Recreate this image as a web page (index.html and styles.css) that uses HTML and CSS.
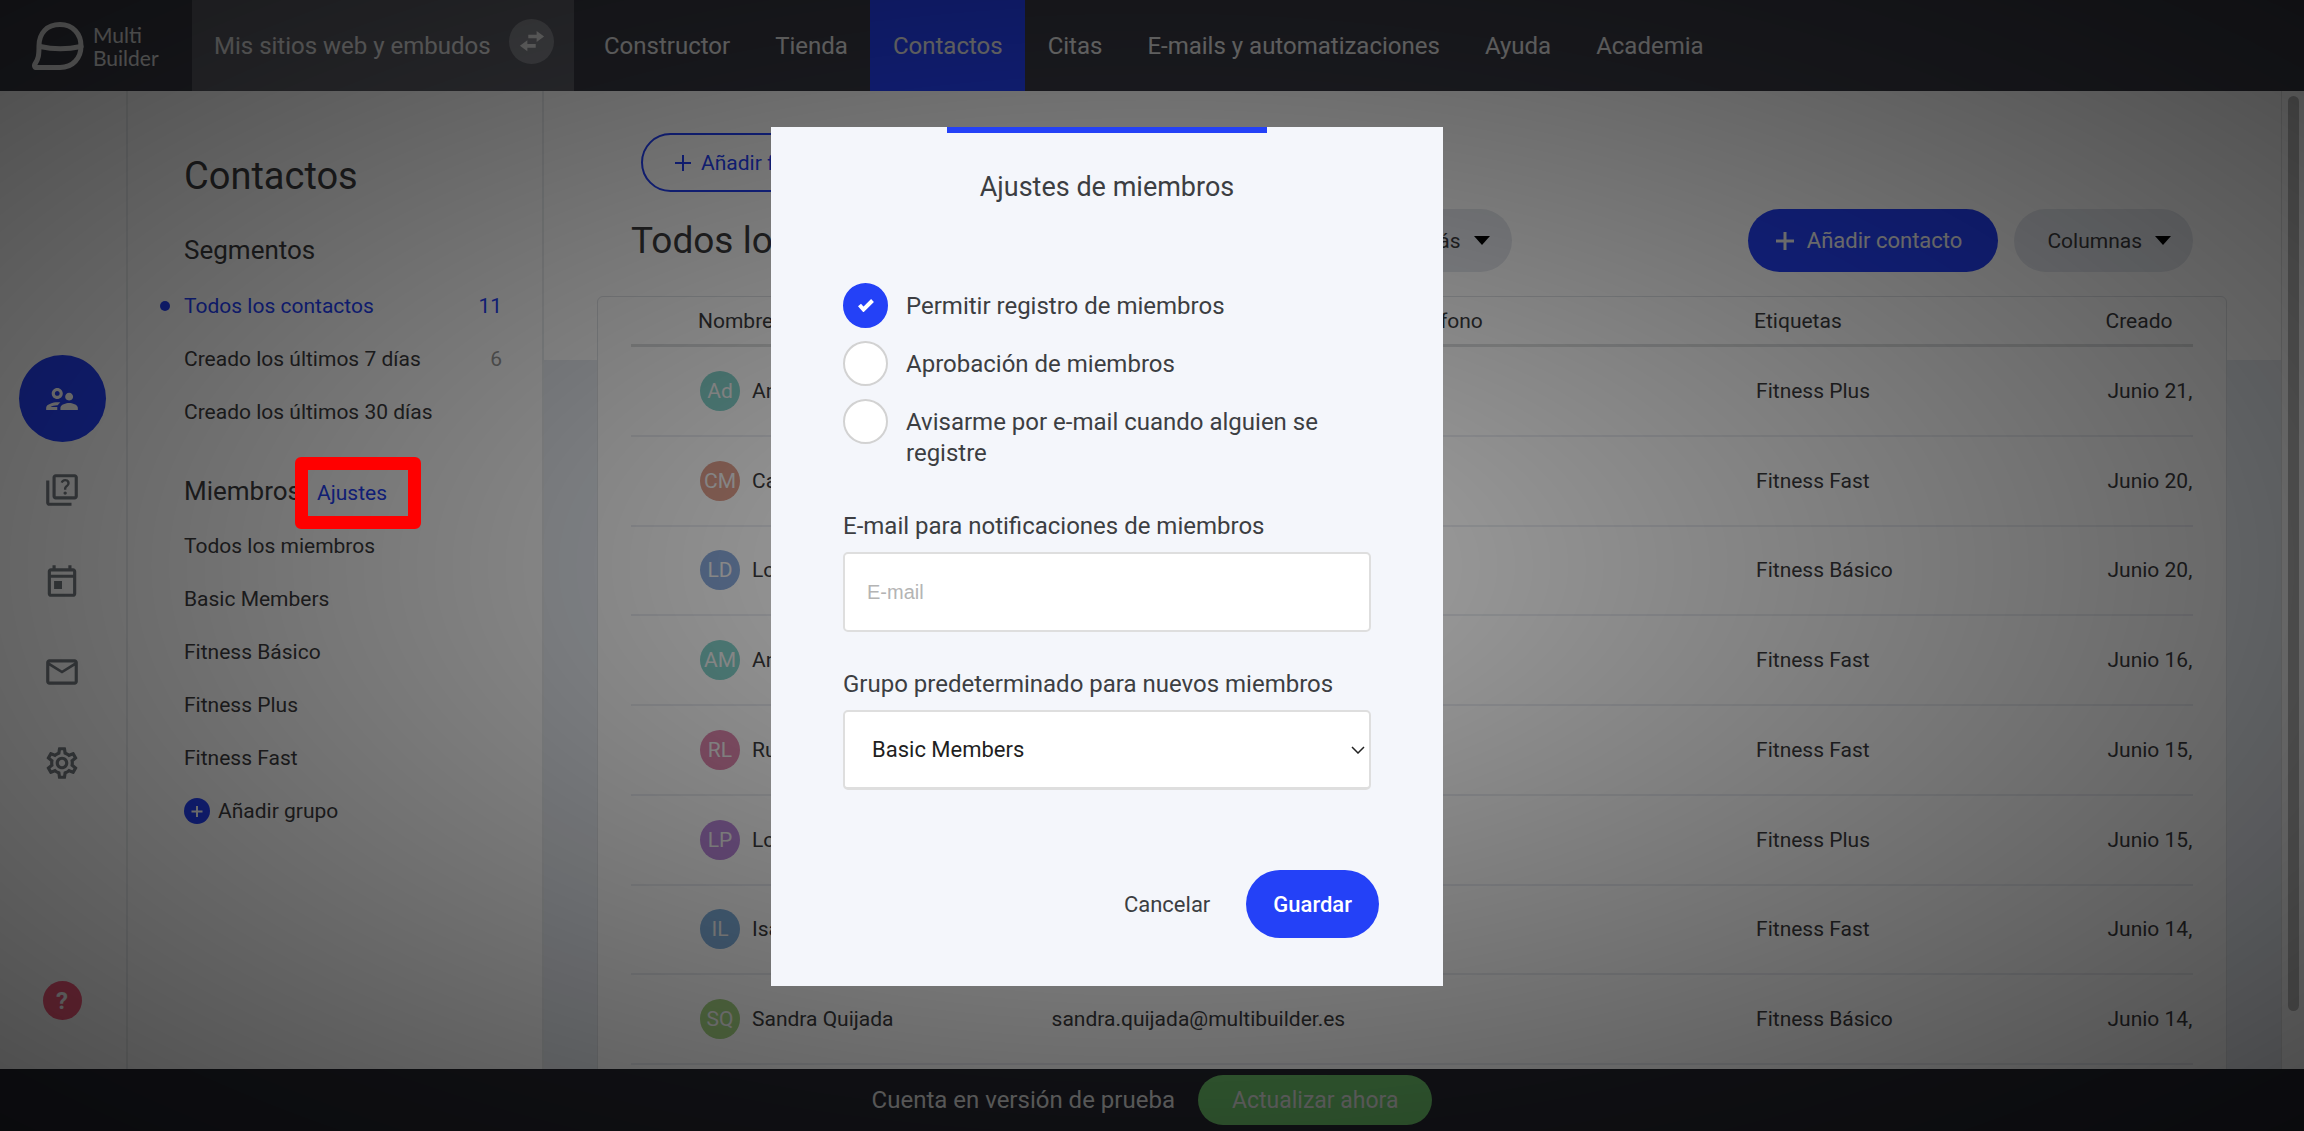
FILE: index.html
```html
<!DOCTYPE html>
<html lang="es">
<head>
    <meta charset="UTF-8">
    <meta name="viewport" content="width=device-width, initial-scale=1.0">
    <title>Contactos - Multi Builder</title>
    <link rel="stylesheet" href="styles.css">
</head>
<body>

<header class="topbar">
    <a href="#" class="logo">
        <svg class="logo-mark" viewBox="0 0 52 48" fill="none" stroke="currentColor" stroke-width="5" stroke-linecap="round" stroke-linejoin="round">
            <path d="M7 24C7 11 15 2.500 28 2.500S49 12 49 24 41 45.500 28 45.500H4.500c-2 0-2.500-2-1.500-3.500C6.500 37 7 33 7 24z"/>
            <path d="M8 24.500q20 4.500 41 0"/>
        </svg>
        <span>Multi<br>Builder</span>
    </a>
    <button type="button" class="site-switch">
        <span>Mis sitios web y embudos</span>
        <span class="switch-icon">
            <svg viewBox="0 0 28 24" fill="currentColor">
                <path d="M19 1l8 6-8 6V9H10V5h9zM9 11l-8 6 8 6v-4h9v-4H9z"/>
            </svg>
        </span>
    </button>
    <nav class="main-nav">
        <a href="#">Constructor</a>
        <a href="#">Tienda</a>
        <a href="#" class="active">Contactos</a>
        <a href="#">Citas</a>
        <a href="#">E-mails y automatizaciones</a>
        <a href="#">Ayuda</a>
        <a href="#">Academia</a>
    </nav>
</header>

<div class="workspace">
    <nav class="rail" aria-label="Herramientas">
        <div class="rail-links">
            <a href="#" class="rail-link active" aria-label="Contactos">
                <svg viewBox="0 0 24 24" fill="currentColor"><path d="M9 12c1.930 0 3.500-1.570 3.500-3.500S10.930 5 9 5 5.500 6.570 5.500 8.500 7.070 12 9 12zm0-5c.830 0 1.500.670 1.500 1.500S9.830 10 9 10s-1.500-.670-1.500-1.500S8.170 7 9 7zM9.050 17H4.770c.990-.5 2.700-1 4.230-1 .110 0 .230.010.340.010.340-.730.930-1.330 1.640-1.810-.730-.130-1.420-.2-1.980-.2-2.340 0-7 1.170-7 3.500V19h7v-1.500c0-.170.020-.340.050-.5zM16.500 14.500c-1.840 0-5.500 1.010-5.500 3V19h11v-1.500c0-1.990-3.660-3-5.500-3zm1.210-1.820c.760-.430 1.290-1.240 1.290-2.180C19 9.120 17.880 8 16.500 8S14 9.120 14 10.500c0 .940.530 1.750 1.290 2.180.360.200.770.320 1.210.320s.850-.120 1.210-.320z"/></svg>
            </a>
            <a href="#" class="rail-link" aria-label="Cuestionarios">
                <svg viewBox="0 0 24 24" fill="currentColor"><path d="M4 6H2v14c0 1.100.9 2 2 2h14v-2H4V6zm16-4H8c-1.100 0-2 .9-2 2v12c0 1.100.9 2 2 2h12c1.100 0 2-.9 2-2V4c0-1.100-.9-2-2-2zm0 14H8V4h12v12zm-6.490-5.840c.410-.730 1.180-1.160 1.630-1.800.480-.680.210-1.940-1.140-1.940-.880 0-1.320.670-1.500 1.230l-1.370-.570C11.510 5.960 12.520 5 13.990 5c1.230 0 2.080.560 2.510 1.260.370.610.580 1.730.010 2.570-.630.930-1.230 1.210-1.560 1.810-.130.240-.180.400-.180 1.180h-1.520c.010-.410-.060-1.080.260-1.660zm-.560 3.790c0-.590.470-1.040 1.050-1.040.590 0 1.040.450 1.040 1.040 0 .580-.440 1.050-1.040 1.050-.580 0-1.050-.470-1.050-1.050z"/></svg>
            </a>
            <a href="#" class="rail-link" aria-label="Calendario">
                <svg viewBox="0 0 24 24" fill="currentColor"><path d="M19 4h-1V2h-2v2H8V2H6v2H5c-1.110 0-2 .9-2 2v14c0 1.100.890 2 2 2h14c1.100 0 2-.9 2-2V6c0-1.100-.9-2-2-2zm0 16H5V10h14v10zm0-12H5V6h14v2zM7 12h5v5H7z"/></svg>
            </a>
            <a href="#" class="rail-link" aria-label="E-mails">
                <svg viewBox="0 0 24 24" fill="currentColor"><path d="M22 6c0-1.100-.9-2-2-2H4c-1.100 0-2 .9-2 2v12c0 1.100.9 2 2 2h16c1.100 0 2-.9 2-2V6zm-2 0l-8 5-8-5h16zm0 12H4V8l8 5 8-5v10z"/></svg>
            </a>
            <a href="#" class="rail-link" aria-label="Ajustes generales">
                <svg viewBox="0 0 24 24" fill="currentColor"><path d="M19.430 12.980c.040-.320.070-.640.070-.980s-.030-.660-.070-.980l2.110-1.650c.190-.150.240-.420.120-.640l-2-3.460c-.090-.160-.260-.250-.440-.250-.060 0-.120.010-.170.030l-2.490 1c-.520-.400-1.080-.730-1.690-.980l-.380-2.650C14.460 2.180 14.250 2 14 2h-4c-.250 0-.460.180-.490.420l-.380 2.650c-.610.250-1.170.590-1.690.980l-2.490-1c-.060-.020-.120-.030-.180-.030-.170 0-.340.090-.430.250l-2 3.460c-.130.220-.070.490.120.640l2.110 1.650c-.040.320-.070.650-.070.980s.030.660.070.980l-2.110 1.650c-.190.150-.240.420-.120.640l2 3.460c.090.160.260.250.440.250.060 0 .120-.010.170-.030l2.490-1c.520.400 1.080.730 1.690.980l.380 2.650c.030.240.240.420.490.420h4c.250 0 .460-.180.490-.420l.380-2.650c.610-.250 1.170-.590 1.690-.980l2.490 1c.060.020.120.030.180.030.170 0 .340-.090.430-.250l2-3.460c.120-.220.070-.490-.120-.640l-2.110-1.650zm-1.980-1.710c.040.310.050.520.050.730 0 .210-.020.430-.050.730l-.140 1.130.890.700 1.080.840-.700 1.210-1.270-.510-1.040-.420-.9.680c-.430.320-.840.560-1.250.730l-1.060.430-.160 1.130-.2 1.350h-1.400l-.190-1.350-.160-1.130-1.060-.430c-.430-.180-.830-.410-1.230-.710l-.910-.7-1.060.430-1.270.510-.7-1.210 1.080-.840.890-.7-.140-1.130c-.030-.310-.050-.540-.050-.740s.020-.430.050-.730l.140-1.130-.890-.7-1.080-.840.7-1.210 1.270.510 1.040.420.9-.680c.430-.320.840-.560 1.250-.730l1.060-.430.160-1.130.2-1.350h1.390l.190 1.350.160 1.130 1.060.430c.430.180.830.410 1.230.710l.910.7 1.060-.430 1.270-.510.7 1.210-1.070.850-.890.7.140 1.130zM12 8c-2.210 0-4 1.790-4 4s1.790 4 4 4 4-1.790 4-4-1.790-4-4-4zm0 6c-1.100 0-2-.9-2-2s.9-2 2-2 2 .9 2 2-.9 2-2 2z"/></svg>
            </a>
        </div>
        <button type="button" class="help">?</button>
    </nav>

    <aside class="panel">
        <h1>Contactos</h1>
        <h2>Segmentos</h2>
        <ul class="groups">
            <li class="current"><a href="#">Todos los contactos</a><span class="count">11</span></li>
            <li><a href="#">Creado los últimos 7 días</a><span class="count">6</span></li>
            <li><a href="#">Creado los últimos 30 días</a></li>
        </ul>
        <div class="members-head">
            <h2>Miembros</h2>
            <a href="#" class="settings-link">Ajustes</a>
        </div>
        <ul class="groups">
            <li><a href="#">Todos los miembros</a></li>
            <li><a href="#">Basic Members</a></li>
            <li><a href="#">Fitness Básico</a></li>
            <li><a href="#">Fitness Plus</a></li>
            <li><a href="#">Fitness Fast</a></li>
        </ul>
        <button type="button" class="add-group">
            <svg viewBox="0 0 26 26"><circle cx="13" cy="13" r="13" fill="#2441f7"/><path d="M13 8v11M7.500 13.500h11" stroke="#fff" stroke-width="2"/></svg>
            Añadir grupo
        </button>
    </aside>

    <main class="content">
        <button type="button" class="outline-btn">
            <svg viewBox="0 0 16 16" fill="none" stroke="currentColor" stroke-width="2"><path d="M8 0v16M0 8h16"/></svg>
            Añadir formulario
        </button>
        <div class="toolbar">
            <h2 class="view-title">Todos los contactos</h2>
            <button type="button" class="pill">Más <span class="caret"></span></button>
            <button type="button" class="primary-btn">
                <svg viewBox="0 0 18 18" fill="none" stroke="currentColor" stroke-width="3"><path d="M9 0v18M0 9h18"/></svg>
                Añadir contacto
            </button>
            <button type="button" class="pill">Columnas <span class="caret"></span></button>
        </div>
        <div class="card">
            <table class="contacts">
                <colgroup>
                    <col class="col-name"><col class="col-email"><col class="col-phone"><col class="col-tags"><col>
                </colgroup>
                <thead>
                    <tr><th>Nombre</th><th>E-mail</th><th>Teléfono</th><th>Etiquetas</th><th>Creado</th></tr>
                </thead>
                <tbody>
                    <tr><td><div class="person"><span class="avatar teal">Ad</span>Ana</div></td><td></td><td></td><td>Fitness Plus</td><td>Junio 21,</td></tr>
                    <tr><td><div class="person"><span class="avatar coral">CM</span>Carlos</div></td><td></td><td></td><td>Fitness Fast</td><td>Junio 20,</td></tr>
                    <tr><td><div class="person"><span class="avatar blue">LD</span>Lola</div></td><td></td><td></td><td>Fitness Básico</td><td>Junio 20,</td></tr>
                    <tr><td><div class="person"><span class="avatar teal">AM</span>Ana</div></td><td></td><td></td><td>Fitness Fast</td><td>Junio 16,</td></tr>
                    <tr><td><div class="person"><span class="avatar pink">RL</span>Rubén</div></td><td></td><td></td><td>Fitness Fast</td><td>Junio 15,</td></tr>
                    <tr><td><div class="person"><span class="avatar purple">LP</span>Lola</div></td><td></td><td></td><td>Fitness Plus</td><td>Junio 15,</td></tr>
                    <tr><td><div class="person"><span class="avatar sky">IL</span>Isabel</div></td><td></td><td></td><td>Fitness Fast</td><td>Junio 14,</td></tr>
                    <tr><td><div class="person"><span class="avatar green">SQ</span>Sandra Quijada</div></td><td>sandra.quijada@multibuilder.es</td><td></td><td>Fitness Básico</td><td>Junio 14,</td></tr>
                </tbody>
            </table>
        </div>
    </main>

    <div class="scroll-track"><div class="scroll-thumb"></div></div>
</div>

<footer class="trial">
    <span>Cuenta en versión de prueba</span>
    <button type="button" class="upgrade">Actualizar ahora</button>
</footer>

<!-- Members settings -->
<div class="overlay">
    <form class="modal" role="dialog" aria-labelledby="modalTitle">
        <h2 id="modalTitle">Ajustes de miembros</h2>
        <div class="checks">
            <label class="check"><input type="checkbox" checked><span>Permitir registro de miembros</span></label>
            <label class="check"><input type="checkbox"><span>Aprobación de miembros</span></label>
            <label class="check"><input type="checkbox"><span>Avisarme por e-mail cuando alguien se registre</span></label>
        </div>
        <div class="field">
            <label for="email">E-mail para notificaciones de miembros</label>
            <input type="email" id="email" placeholder="E-mail">
        </div>
        <div class="field">
            <label for="group">Grupo predeterminado para nuevos miembros</label>
            <select id="group">
                <option>Basic Members</option>
                <option>Fitness Básico</option>
                <option>Fitness Plus</option>
                <option>Fitness Fast</option>
            </select>
        </div>
        <div class="actions">
            <button type="button" class="cancel">Cancelar</button>
            <button type="submit" class="save">Guardar</button>
        </div>
    </form>
</div>

</body>
</html>
```
FILE: styles.css
```css
* {
    box-sizing: border-box;
}
body {
    margin: 0;
    height: 100vh;
    display: flex;
    flex-direction: column;
    overflow: hidden;
    font-family: Roboto, "Liberation Sans", sans-serif;
    font-size: 21px;
    color: #3c3c3e;
    background-color: #fff;
}
h1, h2, ul {
    margin: 0;
    padding: 0;
    font-weight: 400;
}
a {
    color: inherit;
    text-decoration: none;
}
button {
    border: 0;
    padding: 0;
    background: none;
    font: inherit;
    color: inherit;
    cursor: pointer;
}

/* Top bar */
.topbar {
    display: flex;
    flex: none;
    height: 91px;
    background-color: #383943;
    color: #e2e2e2;
    font-size: 24px;
}
.logo {
    display: flex;
    align-items: center;
    gap: 9px;
    width: 192px;
    padding-left: 32px;
    font-family: Lato, sans-serif;
    font-size: 21px;
    line-height: 23px;
}
.logo-mark {
    width: 52px;
    height: 48px;
}
.site-switch {
    display: flex;
    align-items: center;
    justify-content: space-between;
    width: 382px;
    padding: 0 20px 0 22px;
    background-color: #5a5b63;
}
.switch-icon {
    display: flex;
    align-items: center;
    justify-content: center;
    width: 45px;
    height: 45px;
    margin-bottom: 8px;
    border-radius: 50%;
    background-color: #85868c;
}
.switch-icon svg {
    width: 26px;
}
.main-nav {
    display: flex;
    padding-left: 7px;
}
.main-nav a {
    display: flex;
    align-items: center;
    padding: 0 22px 0 23px;
}
.main-nav .active {
    background-color: #2441f7;
}

.workspace {
    display: flex;
    flex: 1;
    min-height: 0;
}

/* Icon rail */
.rail {
    display: flex;
    flex-direction: column;
    align-items: center;
    justify-content: space-between;
    width: 128px;
    padding: 264px 2px 49px 0;
    border-right: 2px solid #e9ecee;
}
.rail-links {
    display: flex;
    flex-direction: column;
    gap: 4px;
}
.rail-link {
    display: flex;
    align-items: center;
    justify-content: center;
    width: 87px;
    height: 87px;
    border-radius: 50%;
    color: #757b80;
}
.rail-link svg {
    width: 38px;
    height: 38px;
}
.rail-link.active {
    background-color: #2441f7;
    color: #fff;
}
.help {
    width: 39px;
    height: 39px;
    border-radius: 50%;
    background-color: #f2597a;
    color: #fff;
    font-size: 24px;
    font-weight: 700;
}

/* Segments and groups */
.panel {
    width: 416px;
    padding: 63px 40px 0 56px;
    border-right: 2px solid #e9ecee;
}
.panel h1 {
    font-size: 38px;
    line-height: 44px;
}
.panel h2 {
    font-size: 26px;
    line-height: 36px;
}
.panel h1 + h2 {
    margin: 34px 0 11px;
}
.groups {
    list-style: none;
}
.groups li {
    display: flex;
    align-items: center;
    justify-content: space-between;
    height: 53px;
}
.current {
    position: relative;
    color: #2441f7;
}
.current::before {
    content: "";
    position: absolute;
    left: -24px;
    width: 10px;
    height: 10px;
    border-radius: 50%;
    background-color: #2441f7;
}
.count {
    color: #999;
}
.current .count {
    color: #2441f7;
}
.members-head {
    display: flex;
    align-items: baseline;
    gap: 16px;
    padding: 35px 0 10px;
}
.settings-link {
    position: relative;
    color: #2441f7;
}
/* Sits over the dimmed page */
.settings-link::after {
    content: "";
    position: absolute;
    z-index: 20;
    inset: -24px -34px -24px -22px;
    border: 13px solid #f00;
    border-radius: 6px;
}
.add-group {
    display: flex;
    align-items: center;
    gap: 8px;
    height: 53px;
}
.add-group svg {
    width: 26px;
    height: 26px;
}

/* Contacts list */
.content {
    flex: 1;
    min-width: 0;
    padding: 42px 54px 0 53px;
    background: linear-gradient(#fff 269px, #e9edf3 269px);
}
.outline-btn {
    display: flex;
    align-items: center;
    gap: 10px;
    height: 59px;
    margin-left: 44px;
    padding: 0 32px;
    border: 2px solid #2441f7;
    border-radius: 30px;
    color: #2441f7;
}
.outline-btn svg {
    width: 16px;
}
.toolbar {
    display: flex;
    align-items: center;
    gap: 16px;
    padding: 17px 34px 24px;
}
.view-title {
    width: 740px;
    font-size: 37px;
}
.pill, .primary-btn {
    display: flex;
    align-items: center;
    height: 63px;
    border-radius: 32px;
}
.pill {
    gap: 13px;
    padding: 0 22px 0 33px;
    background-color: #e4e7ed;
}
.caret {
    border: 8px solid transparent;
    border-top: 9px solid #000;
    border-bottom: 0;
}
.primary-btn {
    gap: 13px;
    margin-left: auto;
    padding: 0 36px 0 28px;
    background-color: #2441f7;
    color: #eee;
    font-size: 22px;
}
.primary-btn svg {
    width: 18px;
}
.card {
    min-height: 800px;
    padding: 0 33px;
    border: 1px solid #dfe2e6;
    border-radius: 6px;
    background-color: #fff;
}
.contacts {
    width: 100%;
    height: 768px;
    table-layout: fixed;
    border-spacing: 0;
    white-space: nowrap;
}
.contacts th {
    height: 50px;
    padding: 0;
    border-bottom: 3px solid #dcdedf;
    font-weight: 400;
    text-align: left;
}
.contacts td {
    padding: 0 0 0 2px;
    border-bottom: 2px solid #ebedf2;
}
.contacts th:first-child {
    padding-left: 67px;
}
.contacts td:first-child {
    padding-left: 69px;
}
.col-name {
    width: 26.8%;
}
.col-email {
    width: 22.5%;
}
.col-phone {
    width: 22.6%;
}
.col-tags {
    width: 22.5%;
}
.person {
    display: flex;
    align-items: center;
    gap: 12px;
}
.avatar {
    display: flex;
    align-items: center;
    justify-content: center;
    width: 40px;
    height: 40px;
    border-radius: 50%;
    color: #f2f2f2;
}
.teal { background-color: #85d3cc; }
.coral { background-color: #e0a08e; }
.blue { background-color: #8cadde; }
.pink { background-color: #e088b0; }
.purple { background-color: #bb88dc; }
.sky { background-color: #7fafdc; }
.green { background-color: #a4d482; }

.scroll-track {
    width: 23px;
    padding: 5px 5px 0 6px;
    border-left: 1px solid #e3e3e3;
}
.scroll-thumb {
    height: 94%;
    border-radius: 6px;
    background-color: #bcbcbc;
}

/* Trial notice */
.trial {
    display: flex;
    flex: none;
    align-items: center;
    justify-content: center;
    gap: 23px;
    height: 62px;
    background-color: #25262f;
    color: #d6d6d6;
    font-size: 24px;
}
.upgrade {
    height: 50px;
    padding: 0 34px;
    border-radius: 25px;
    background-color: #6bbf69;
    font-size: 23px;
}

/* Members settings */
.overlay {
    position: fixed;
    inset: 0;
    z-index: 10;
    display: flex;
    align-items: flex-start;
    justify-content: center;
    padding: 127px 90px 0 0;
    background: radial-gradient(rgba(0, 0, 0, 0.35), rgba(0, 0, 0, 0.71));
}
.modal {
    width: 672px;
    padding: 0 72px 48px;
    background: linear-gradient(#2441f7, #2441f7) top / 320px 6px no-repeat #f4f6fb;
    color: #3c3e42;
    font-size: 24px;
}
.modal h2 {
    padding: 43px 0 79px;
    font-size: 27px;
    line-height: 34px;
    text-align: center;
}
.checks {
    display: flex;
    flex-direction: column;
    gap: 13px;
}
.check {
    display: flex;
    align-items: flex-start;
    gap: 18px;
    line-height: 31px;
}
.check span {
    padding-top: 8px;
}
.check input {
    appearance: none;
    flex: none;
    width: 45px;
    height: 45px;
    margin: 0;
    border: 2px solid #d2d2d2;
    border-radius: 50%;
    background-color: #fff;
}
.check input:checked {
    border-color: #2441f7;
    background: url("data:image/svg+xml,%3Csvg xmlns='http://www.w3.org/2000/svg' viewBox='0 0 16 13' fill='none' stroke='white' stroke-width='4'%3E%3Cpath d='M1.500 6l4 4.500 9-9'/%3E%3C/svg%3E") center / 16px 13px no-repeat #2441f7;
}
.field {
    display: flex;
    flex-direction: column;
    gap: 10px;
    margin-top: 36px;
    line-height: 32px;
}
.checks + .field {
    margin-top: 41px;
}
.field input, .field select {
    width: 100%;
    height: 80px;
    border: 2px solid #dedede;
    border-radius: 5px;
    background-color: #fff;
}
.field input {
    padding: 0 22px;
    font-family: "Liberation Sans", Arial, sans-serif;
    font-size: 20px;
}
.field input::placeholder {
    color: #b4b4b4;
}
.field select {
    appearance: none;
    padding: 0 27px;
    border-bottom-width: 3px;
    background: url("data:image/svg+xml,%3Csvg xmlns='http://www.w3.org/2000/svg' viewBox='0 0 14 8' fill='none' stroke='%23222' stroke-width='1.500'%3E%3Cpath d='M1 1l6 6 6-6'/%3E%3C/svg%3E") right 4px center / 14px 8px no-repeat #fff;
    color: #1f1f1f;
    font-family: inherit;
    font-size: 22px;
}
.actions {
    display: flex;
    justify-content: flex-end;
    gap: 36px;
    margin: 80px -8px 0 0;
    font-size: 22px;
}
.save {
    height: 68px;
    padding: 0 27px;
    border-radius: 34px;
    background-color: #2441f7;
    color: #fff;
    font-weight: 500;
}
```
